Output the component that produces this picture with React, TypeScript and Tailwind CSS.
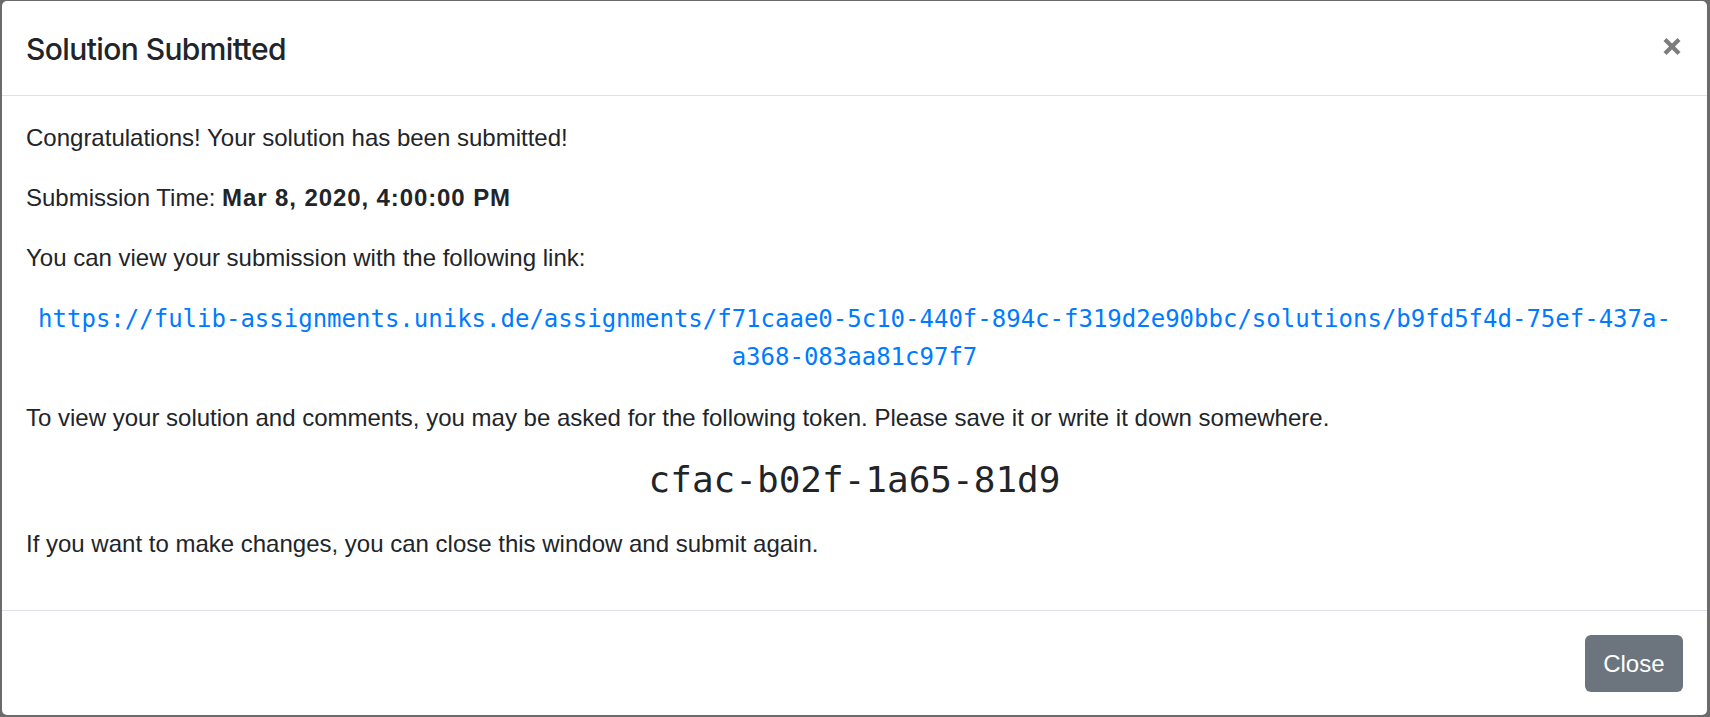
const SOLUTION_URL =
  "https://fulib-assignments.uniks.de/assignments/f71caae0-5c10-440f-894c-f319d2e90bbc/solutions/b9fd5f4d-75ef-437a-a368-083aa81c97f7";

const TOKEN = "cfac-b02f-1a65-81d9";

export default function App() {
  return (
    <div className="h-[717px] w-[1710px] overflow-hidden bg-[#6b6b6b] pt-px pl-[2px] pr-[3px]">
      <div className="rounded-[5px] bg-white font-['Liberation_Sans',Arial,sans-serif] text-[#212529]">
        {/* header */}
        <div className="flex h-[95px] items-start justify-between border-b border-[#dee2e6] pl-6 pr-[26px] pt-[26px]">
          <h5 className="font-['Inter',sans-serif] text-[30px] font-medium leading-[45px] tracking-[-0.6px]">
            Solution Submitted
          </h5>
          <button className="mt-[11px]" aria-label="Close">
            <svg width="18" height="17" viewBox="0 0 18 17">
              <path d="M2 1.5 L16 15.5 M16 1.5 L2 15.5" stroke="#7d7d7d" strokeWidth="4.2" />
            </svg>
          </button>
        </div>

        {/* body */}
        <div className="px-6 pt-6 pb-6 text-[24px] leading-[36px]">
          <p className="mb-6">Congratulations! Your solution has been submitted!</p>
          <p className="mb-6">
            Submission Time: <strong className="font-bold tracking-[0.9px]">Mar 8, 2020, 4:00:00 PM</strong>
          </p>
          <p className="mb-6">You can view your submission with the following link:</p>
          <p className="mb-6 text-center font-['DejaVu_Sans_Mono',monospace] leading-[38px]">
            <a href="#" className="text-[#007bff]">
              {SOLUTION_URL}
            </a>
          </p>
          <p className="mb-6">
            To view your solution and comments, you may be asked for the following token. Please save it or write it
            down somewhere.
          </p>
          <p className="mb-[26px] text-center font-['DejaVu_Sans_Mono',monospace] text-[36px] leading-[40px]">
            {TOKEN}
          </p>
          <p className="mb-6">If you want to make changes, you can close this window and submit again.</p>
        </div>

        {/* footer */}
        <div className="flex justify-end border-t border-[#dee2e6] px-[18px] pt-[18px] pb-[17px]">
          <button className="m-[6px] h-[57px] rounded-[6px] bg-[#6c757d] px-[18.5px] text-[24px] leading-[36px] text-white">
            Close
          </button>
        </div>
      </div>
    </div>
  );
}
